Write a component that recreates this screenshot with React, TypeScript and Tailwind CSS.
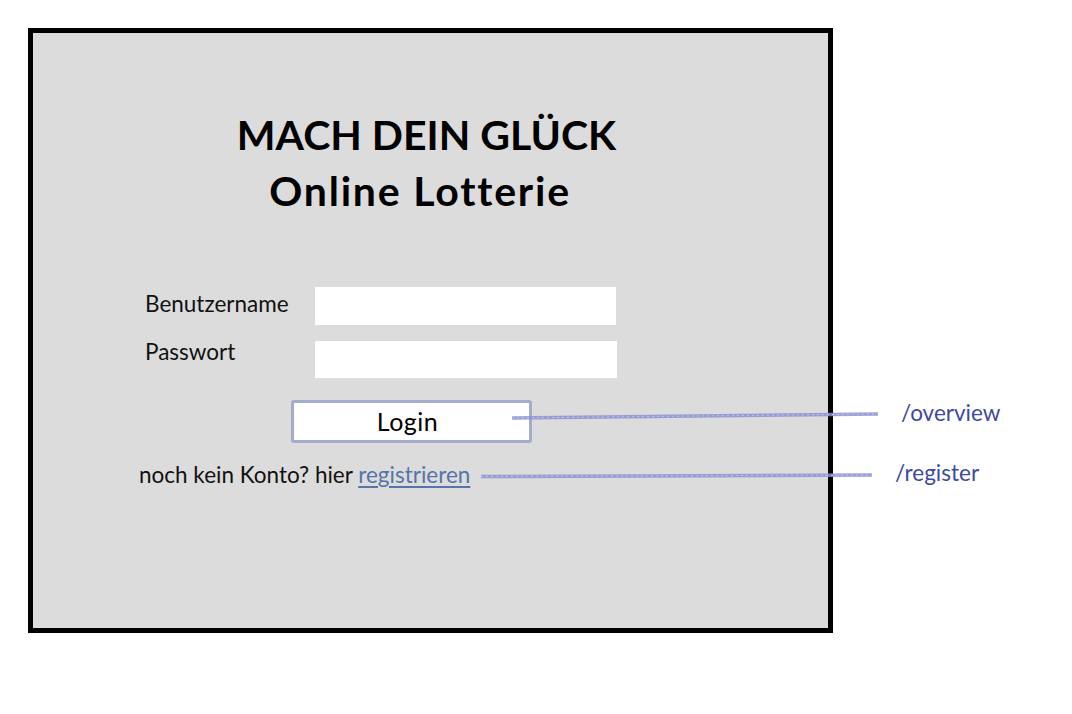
import React from "react";

export default function App() {
  return (
    <div className="relative w-[1072px] h-[714px] bg-white" style={{ fontFamily: "Lato, 'Noto Sans', sans-serif" }}>
      <div className="pl-[28px] pt-[28px]">
        <div className="w-[805px] h-[605px] border-[5px] border-black bg-[#dcdcdc] flex flex-col">
          <div className="mt-[74px] w-[782px] flex flex-col items-center font-bold text-black text-[41px] leading-[56px]">
            <div className="pl-[5px]">MACH DEIN GLÜCK</div>
            <div className="pr-[8px] tracking-[1.8px]">Online Lotterie</div>
          </div>
          <div className="mt-[68px] ml-[112px] flex flex-col gap-[16px]">
            <div className="flex items-start">
              <label className="w-[170px] text-[22.5px] leading-[26px] text-[#111] mt-[4px]">Benutzername</label>
              <div className="w-[301px] h-[38px] bg-white"></div>
            </div>
            <div className="flex items-start">
              <label className="w-[170px] text-[22.5px] leading-[26px] text-[#111] mt-[-2px]">Passwort</label>
              <div className="w-[302px] h-[37px] bg-white"></div>
            </div>
          </div>
          <div className="mt-[22px] ml-[258px] w-[241px] h-[43px] bg-white border-[3px] border-[#a3acca] rounded-[3px] flex items-center justify-center pr-[8px] text-[25px] tracking-[0.5px] text-black">
            Login
          </div>
          <div className="mt-[19px] ml-[106px] text-[22.5px] leading-[26px] text-[#111]">
            noch kein Konto? hier{" "}
            <span className="text-[#5574a8] underline decoration-[#5574a8] underline-offset-[3px]">registrieren</span>
          </div>
        </div>
      </div>
      <svg className="absolute left-0 top-0" width="1072" height="714">
        <line x1="512" y1="418" x2="878" y2="414" stroke="#8c92d2" strokeWidth="3.5" strokeOpacity="0.85" />
        <line x1="512" y1="418" x2="878" y2="414" stroke="#c3c6ea" strokeWidth="1" strokeDasharray="2 3" />
        <line x1="481" y1="476.5" x2="872" y2="475" stroke="#8c92d2" strokeWidth="3.5" strokeOpacity="0.85" />
        <line x1="481" y1="476.5" x2="872" y2="475" stroke="#c3c6ea" strokeWidth="1" strokeDasharray="2 3" />
      </svg>
      <div className="absolute left-[901px] top-[399px] text-[22.5px] leading-[28px] text-[#3c4aa0]">/overview</div>
      <div className="absolute left-[895px] top-[459px] text-[22.5px] leading-[28px] text-[#3c4aa0]">/register</div>
    </div>
  );
}
